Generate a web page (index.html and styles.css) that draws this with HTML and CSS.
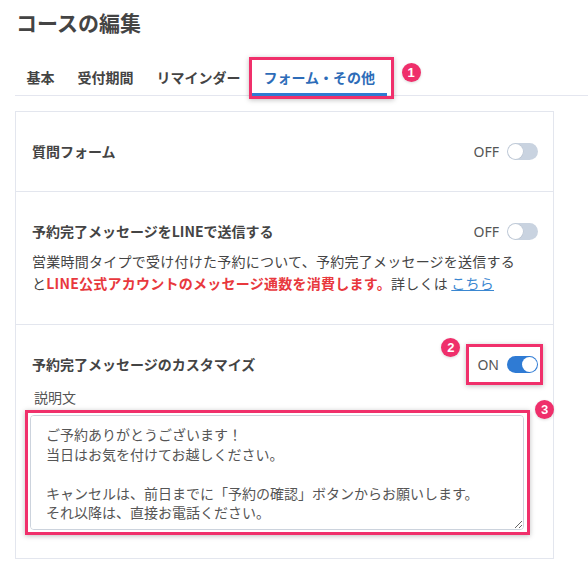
FILE: index.html
```html
<!DOCTYPE html>
<html lang="ja">
<head>
<meta charset="utf-8">
<title>コースの編集</title>
<link rel="stylesheet" href="styles.css">
</head>
<body>
<header class="page-head">
  <h1 class="page-title">コースの編集</h1>
</header>
<nav class="tabs">
  <a class="tab">基本</a>
  <a class="tab">受付期間</a>
  <a class="tab">リマインダー</a>
  <a class="tab tab-active">フォーム・その他
    <span class="mark mark-tab"><span class="badge badge-1">1</span></span>
  </a>
</nav>
<section class="card">
  <div class="row">
    <div class="row-head">
      <span class="row-title">質問フォーム</span>
      <span class="switch"><span class="switch-label">OFF</span><span class="toggle"></span></span>
    </div>
  </div>
  <div class="row">
    <div class="row-head">
      <span class="row-title">予約完了メッセージをLINEで送信する</span>
      <span class="switch"><span class="switch-label">OFF</span><span class="toggle"></span></span>
    </div>
    <p class="row-desc">営業時間タイプで受け付けた予約について、予約完了メッセージを送信すると<strong class="warn">LINE公式アカウントのメッセージ通数を消費します。</strong>詳しくは <a class="link">こちら</a></p>
  </div>
  <div class="row">
    <div class="row-head">
      <span class="row-title">予約完了メッセージのカスタマイズ</span>
      <span class="switch">
        <span class="switch-label">ON</span><span class="toggle toggle-on"></span>
        <span class="mark mark-switch"><span class="badge badge-2">2</span></span>
      </span>
    </div>
    <div class="field-label">説明文</div>
    <div class="field">
      <textarea class="textarea" rows="5">ご予約ありがとうございます！
当日はお気を付けてお越しください。

キャンセルは、前日までに「予約の確認」ボタンからお願いします。
それ以降は、直接お電話ください。</textarea>
      <span class="mark mark-field"><span class="badge badge-3">3</span></span>
    </div>
  </div>
</section>
</body>
</html>
```
FILE: styles.css
```css
* { box-sizing: border-box; }
body {
  margin: 0;
  background: #fff;
  font-family: "Noto Sans CJK JP", "Noto Sans", sans-serif;
  color: #444;
  font-size: 14px;
  text-spacing-trim: space-all;
}
.page-head { padding: 6px 16px 0; }
.page-title {
  margin: 0;
  font-size: 21px;
  line-height: 32px;
  font-weight: 700;
  color: #444;
}
.tabs {
  display: flex;
  margin: 19px 0 0 15px;
  border-bottom: 1px solid #e4e6ef;
}
.tab {
  position: relative;
  padding: 10px 11.5px 6px;
  line-height: 20px;
  font-weight: 700;
  font-size: 14px;
  color: #444;
  border-bottom: 3px solid transparent;
  margin-bottom: -1px;
}
.tab-active {
  color: #2d6cb8;
  border-bottom-color: #2f7bd2;
}
.mark {
  position: absolute;
  border: 3px solid #f0306b;
  box-shadow: 0 1px 5px rgba(0,0,0,0.25);
  pointer-events: none;
}
.mark-tab { left: -3px; right: -7px; top: 0; bottom: -6px; }
.badge {
  position: absolute;
  width: 19px;
  height: 19px;
  border-radius: 50%;
  background: #ef2f6b;
  color: #fff;
  font-family: "Liberation Sans", Arial, sans-serif;
  font-weight: 700;
  font-size: 13px;
  line-height: 19px;
  text-align: center;
  box-shadow: 0 1px 3px rgba(0,0,0,0.15);
}
.badge-1 { right: -30px; top: 3px; }
.badge-2 { left: -28px; top: -9px; }
.badge-3 { right: -27px; top: -13px; }
.card {
  margin: 15px 0 0 15px;
  width: 539px;
  border: 1px solid #e3e6ee;
}
.row {
  padding: 27px 15px 28px 16px;
  border-top: 1px solid #e3e6ee;
}
.row:first-child { border-top: 0; }
.row-head {
  display: flex;
  align-items: center;
  justify-content: space-between;
  height: 24px;
}
.row-title {
  font-weight: 700;
  font-size: 14px;
  color: #444;
}
.switch {
  position: relative;
  display: flex;
  align-items: center;
  gap: 8px;
}
.switch-label {
  font-family: "Noto Sans", sans-serif;
  font-size: 14px;
  color: #555;
}
.toggle {
  position: relative;
  width: 31px;
  height: 17px;
  border-radius: 9px;
  background: #c9d3e0;
}
.toggle::after {
  content: "";
  position: absolute;
  left: 1px;
  top: 1px;
  width: 15px;
  height: 15px;
  border-radius: 50%;
  background: #fff;
  box-shadow: 0 0 0 0.5px #b9c3d0;
}
.toggle-on { background: #2f7bd4; }
.toggle-on::after { left: 15px; box-shadow: none; }
.mark-switch { left: -11px; right: -5px; top: -11px; bottom: -11px; }
.row-desc {
  margin: 7px 0 2px;
  max-width: 488px;
  line-height: 22px;
  letter-spacing: 0.25px;
  color: #444;
}
.warn { color: #e8383d; font-weight: 700; }
.link { color: #3a87d1; text-decoration: underline; }
.field-label {
  margin-top: 10px;
  padding-left: 2px;
  line-height: 22px;
  color: #555;
}
.field {
  position: relative;
  margin-top: 7px;
  width: 494px;
  margin-left: -2px;
}
.textarea {
  display: block;
  width: 100%;
  height: 115px;
  padding: 9px 15px;
  border: 1px solid #ccd3dd;
  border-radius: 4px;
  font-family: "Noto Sans CJK JP", sans-serif;
  font-size: 14px;
  line-height: 19.5px;
  color: #555;
  resize: vertical;
  text-spacing-trim: space-all;
}
.mark-field { left: -5px; right: -6px; top: -5px; bottom: -5px; }
```
